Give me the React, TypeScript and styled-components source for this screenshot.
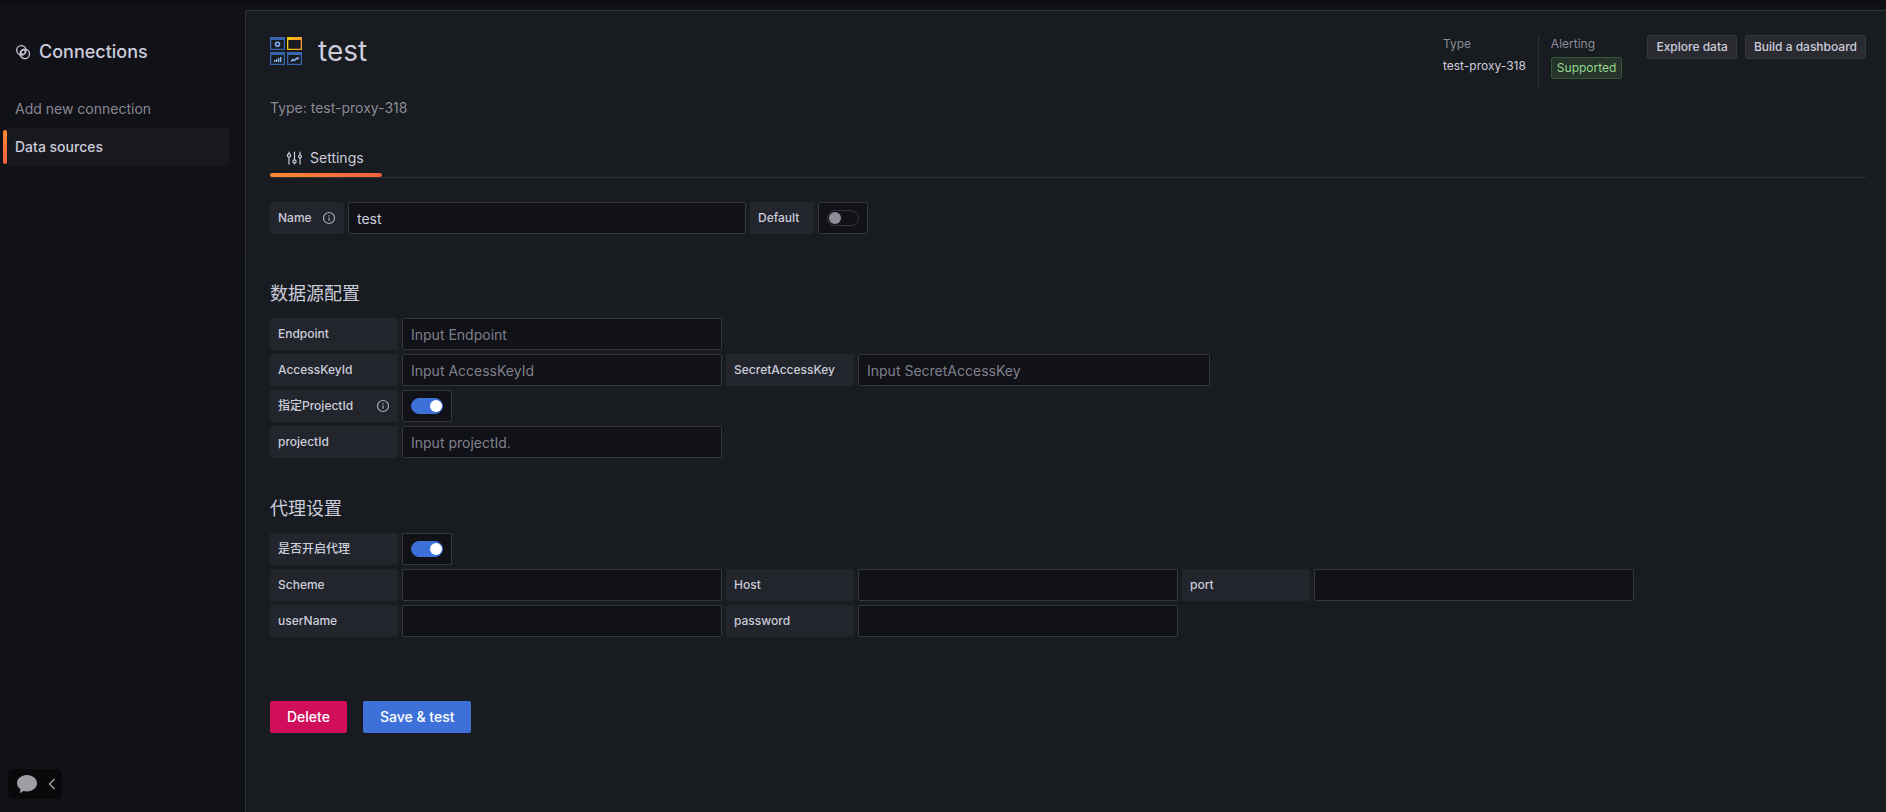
import React from 'react';
import styled, { createGlobalStyle, css } from 'styled-components';

const GlobalStyle = createGlobalStyle`
  * { box-sizing: border-box; }
  body {
    margin: 0;
    background: #111217;
    color: #ccccdc;
    font: 400 14px/22px Inter, "Noto Sans CJK SC", sans-serif;
  }
  button, input { font: inherit; color: inherit; }
`;

const Page = styled.div`
  display: flex;
  min-height: 100vh;
  padding-top: 10px;
  box-shadow: inset 0 4px 6px -4px rgba(0, 0, 0, 0.5);
`;

const Sidebar = styled.nav`
  display: flex;
  flex-direction: column;
  width: 245px;
  flex: none;
  padding: 28px 16px 0 0;
`;

const SidebarTitle = styled.h2`
  display: flex;
  align-items: center;
  gap: 8px;
  margin: 0 0 24px;
  padding-left: 15px;
  font-size: 18px;
  font-weight: 500;
  line-height: 28px;
`;

const NavLink = styled.a<{ $active?: boolean }>`
  display: flex;
  align-items: center;
  height: 38px;
  padding-left: 3px;
  color: rgba(204, 204, 220, 0.65);
  text-decoration: none;
  border-radius: 2px;
  gap: 8px;

  &::before {
    content: '';
    width: 4px;
    height: 34px;
    border-radius: 2px;
  }

  ${(p) =>
    p.$active &&
    css`
      color: #ccccdc;
      font-weight: 500;
      background: linear-gradient(90deg, transparent 7px, #18191d 7px);

      &::before {
        background: linear-gradient(0deg, #f55f3e, #ff8833);
      }
    `}
`;

const ChatWidget = styled.div`
  display: flex;
  align-items: center;
  gap: 8px;
  width: 54px;
  height: 30px;
  margin: auto 0 13px 8px;
  padding-left: 8px;
  border-radius: 6px;
  background: #08090b;
`;

const IconButton = styled.button`
  display: flex;
  padding: 0;
  border: 0;
  background: none;
  color: #9d9fa3;
`;

const Main = styled.main`
  flex: 1;
  min-width: 0;
  padding: 24px 20px 48px 24px;
  background: #181b1f;
  border: solid rgba(204, 204, 220, 0.12);
  border-width: 1px 0 0 1px;
  border-top-left-radius: 2px;
`;

const Header = styled.header`
  display: flex;
  justify-content: space-between;
  align-items: flex-start;
`;

const TitleGroup = styled.div`
  display: flex;
  align-items: center;
  gap: 16px;
  height: 32px;
`;

const Title = styled.h1`
  margin: 0;
  font-size: 28px;
  font-weight: 400;
  line-height: 32px;
`;

const HeaderInfo = styled.div`
  display: flex;
  align-items: flex-start;
`;

const InfoItem = styled.div<{ $divided?: boolean }>`
  display: flex;
  flex-direction: column;
  align-items: flex-start;
  height: 54px;
  font-size: 12px;
  line-height: 18px;
  padding-right: 12px;
  border-right: 1px solid ${(p) => (p.$divided ? 'rgba(204, 204, 220, 0.12)' : 'transparent')};
  margin-right: 12px;
  gap: 4px;
`;

const InfoLabel = styled.span`
  color: rgba(204, 204, 220, 0.65);
`;

const Badge = styled.span`
  height: 22px;
  padding: 1px 5px;
  border: 1px solid #35553a;
  border-radius: 2px;
  background: #25332a;
  color: #96d98d;
`;

const HeaderActions = styled.div`
  display: flex;
  gap: 8px;
`;

const SmallButton = styled.button`
  height: 24px;
  padding: 0 8px;
  border: 1px solid #36373d;
  border-radius: 2px;
  background: #2a2b31;
  font-size: 12px;
  font-weight: 500;
  line-height: 22px;
`;

const Subtitle = styled.p`
  margin: 8px 0 0;
  color: rgba(204, 204, 220, 0.65);
`;

const Tabs = styled.div`
  display: flex;
  margin: 20px 0 24px;
  border-bottom: 1px solid rgba(204, 204, 220, 0.12);
`;

const Tab = styled.a`
  position: relative;
  display: flex;
  align-items: center;
  gap: 8px;
  height: 38px;
  padding: 0 18px 0 16px;
  color: #ccccdc;
  text-decoration: none;

  &::after {
    content: '';
    position: absolute;
    inset: auto 0 0;
    height: 4px;
    border-radius: 2px;
    background: linear-gradient(90deg, #ff8833, #f55f3e);
  }
`;

const Form = styled.form`
  display: flex;
  flex-direction: column;
`;

const Section = styled.section<{ $spacing: number }>`
  display: flex;
  flex-direction: column;
  gap: 4px;
  margin-bottom: ${(p) => p.$spacing}px;
`;

const SectionTitle = styled.h3`
  margin: 0 0 8px;
  font-size: 18px;
  font-weight: 400;
  line-height: 24px;
`;

const Row = styled.div`
  display: flex;
  gap: 4px;
`;

const Label = styled.label<{ $width: number }>`
  display: flex;
  align-items: center;
  justify-content: space-between;
  width: ${(p) => p.$width}px;
  height: 32px;
  padding: 0 8px;
  border-radius: 2px;
  background: #22252b;
  font-size: 12px;
  font-weight: 500;
`;

const TextInput = styled.input<{ $width: number }>`
  width: ${(p) => p.$width}px;
  height: 32px;
  padding: 0 8px;
  border: 1px solid rgba(204, 204, 220, 0.2);
  border-radius: 2px;
  background: #111217;
  outline: none;

  &::placeholder {
    color: rgba(204, 204, 220, 0.6);
    opacity: 1;
  }
`;

const SwitchBox = styled.span`
  display: flex;
  align-items: center;
  width: 50px;
  height: 32px;
  padding-left: 8px;
  border: 1px solid rgba(204, 204, 220, 0.2);
  border-radius: 2px;
  background: #111217;
`;

const Switch = styled.input`
  appearance: none;
  display: flex;
  align-items: center;
  width: 32px;
  height: 16px;
  margin: 0;
  padding: 0 1px;
  border: 1px solid rgba(204, 204, 220, 0.2);
  border-radius: 8px;

  &::before {
    content: '';
    width: 12px;
    height: 12px;
    border-radius: 50%;
    background: #8e8e9a;
  }

  &:checked {
    justify-content: flex-end;
    padding: 0;
    border-color: #3d71d9;
    background: #3d71d9;
  }

  &:checked::before {
    background: #fff;
  }
`;

const Actions = styled.div`
  display: flex;
  gap: 16px;
`;

const Button = styled.button<{ $danger?: boolean }>`
  height: 32px;
  padding: 0 17px;
  border: 0;
  border-radius: 2px;
  background: ${(p) => (p.$danger ? '#d10e5c' : '#3d71d9')};
  color: #fff;
  font-weight: 500;
`;

const ConnectionsIcon = () => (
  <svg width="16" height="16" viewBox="0 0 16 16" fill="none" stroke="currentColor" strokeWidth="1.3">
    <circle cx="6.4" cy="6.3" r="4.7" />
    <circle cx="9.8" cy="9.9" r="4.7" />
    <rect x="6.1" y="6.1" width="4" height="4" rx="0.8" transform="rotate(45 8.1 8.1)" />
  </svg>
);

const SourceLogo = () => (
  <svg width="32" height="28" viewBox="0 0 32 28" fill="none">
    <defs>
      <linearGradient id="gold" x1="0" y1="0" x2="1" y2="0">
        <stop stopColor="#f2cc0c" />
        <stop offset="1" stopColor="#ff9830" />
      </linearGradient>
    </defs>
    <path
      fill="#3865ab"
      fillRule="evenodd"
      d="M0 0h15v13H0zM1.300 3v8.700h12.400V3zM0 15h15v13H0zM1.300 18v8.700h12.400V18zM17 15h15v13H17zM18.300 18v8.700h12.400V18z"
    />
    <path fill="url(#gold)" fillRule="evenodd" d="M17 0h15v13H17zM18.300 3v8.700h12.400V3z" />
    <circle cx="7.5" cy="7.3" r="2" stroke="#84aff1" strokeWidth="1.6" />
    <path fill="#84aff1" d="M4 23h1.500v2H4zM6 22h1.400v3H6zM8 21h1.400v4H8zM10 20h1.400v5H10z" />
    <path stroke="#84aff1" strokeWidth="1.6" d="M21 24.500l2-2 1.500 1 2-2.200 1 .6 1.300-1.400" />
  </svg>
);

const SlidersIcon = () => (
  <svg width="16" height="16" viewBox="0 0 16 16" fill="none" stroke="currentColor" strokeWidth="1.2" strokeLinecap="round">
    <path d="M3 2v1.800M3 7V14M8.500 2v7.800M8.500 13v1M14 2v2.800M14 8V14" />
    <circle cx="3" cy="5.400" r="1.600" />
    <circle cx="8.500" cy="11.400" r="1.600" />
    <circle cx="14" cy="6.400" r="1.400" />
  </svg>
);

const InfoIcon = () => (
  <svg width="14" height="14" viewBox="0 0 14 14" fill="none" stroke="currentColor" strokeWidth="1.2" opacity="0.8">
    <circle cx="7" cy="7" r="5.500" />
    <path d="M7 6.400v3.400M7 4.200v1.200" />
  </svg>
);

const ChatIcon = () => (
  <svg width="22" height="20" viewBox="0 0 22 20" fill="currentColor">
    <path d="M11 1c5.600 0 10 3.600 10 8.300s-4.400 8.200-10 8.200c-1.300 0-2.500-.2-3.600-.5-1 .9-2.300 1.600-3.800 2 .6-1 .9-2.300.8-3.800C2.300 13.700 1 11.600 1 9.300 1 4.600 5.400 1 11 1z" />
  </svg>
);

const ChevronIcon = () => (
  <svg width="12" height="12" viewBox="0 0 12 12" fill="none" stroke="currentColor" strokeWidth="1.400">
    <path d="M8.500 1L3.500 6l5 5" />
  </svg>
);

interface FieldProps {
  id: string;
  label: string;
  labelWidth?: number;
  width?: number;
  placeholder?: string;
  type?: string;
  value?: string;
  info?: boolean;
}

const Field = ({ id, label, labelWidth = 128, width = 320, placeholder, type = 'text', value, info }: FieldProps) => (
  <>
    <Label htmlFor={id} $width={labelWidth}>
      {label}
      {info && <InfoIcon />}
    </Label>
    <TextInput id={id} type={type} $width={width} placeholder={placeholder} defaultValue={value} />
  </>
);

interface ToggleProps {
  id: string;
  label: string;
  labelWidth?: number;
  on?: boolean;
  info?: boolean;
}

const Toggle = ({ id, label, labelWidth = 128, on, info }: ToggleProps) => (
  <>
    <Label htmlFor={id} $width={labelWidth}>
      {label}
      {info && <InfoIcon />}
    </Label>
    <SwitchBox>
      <Switch id={id} type="checkbox" role="switch" defaultChecked={on} />
    </SwitchBox>
  </>
);

export default function App() {
  return (
    <>
      <GlobalStyle />
      <Page>
        <Sidebar>
          <SidebarTitle>
            <ConnectionsIcon />
            Connections
          </SidebarTitle>
          <NavLink href="#new">Add new connection</NavLink>
          <NavLink href="#sources" $active>
            Data sources
          </NavLink>
          <ChatWidget>
            <IconButton aria-label="Chat">
              <ChatIcon />
            </IconButton>
            <IconButton aria-label="Collapse">
              <ChevronIcon />
            </IconButton>
          </ChatWidget>
        </Sidebar>
        <Main>
          <Header>
            <TitleGroup>
              <SourceLogo />
              <Title>test</Title>
            </TitleGroup>
            <HeaderInfo>
              <InfoItem $divided>
                <InfoLabel>Type</InfoLabel>
                <span>test-proxy-318</span>
              </InfoItem>
              <InfoItem>
                <InfoLabel>Alerting</InfoLabel>
                <Badge>Supported</Badge>
              </InfoItem>
              <HeaderActions>
                <SmallButton>Explore data</SmallButton>
                <SmallButton>Build a dashboard</SmallButton>
              </HeaderActions>
            </HeaderInfo>
          </Header>
          <Subtitle>Type: test-proxy-318</Subtitle>
          <Tabs>
            <Tab href="#settings">
              <SlidersIcon />
              Settings
            </Tab>
          </Tabs>
          <Form>
            <Section $spacing={48}>
              <Row>
                <Field id="name" label="Name" labelWidth={74} width={398} value="test" info />
                <Toggle id="default" label="Default" labelWidth={64} />
              </Row>
            </Section>
            <Section $spacing={39}>
              <SectionTitle>数据源配置</SectionTitle>
              <Row>
                <Field id="endpoint" label="Endpoint" placeholder="Input Endpoint" />
              </Row>
              <Row>
                <Field id="access-key" label="AccessKeyId" placeholder="Input AccessKeyId" />
                <Field id="secret-key" label="SecretAccessKey" width={352} placeholder="Input SecretAccessKey" />
              </Row>
              <Row>
                <Toggle id="use-project" label="指定ProjectId" on info />
              </Row>
              <Row>
                <Field id="project" label="projectId" placeholder="Input projectId." />
              </Row>
            </Section>
            <Section $spacing={64}>
              <SectionTitle>代理设置</SectionTitle>
              <Row>
                <Toggle id="use-proxy" label="是否开启代理" on />
              </Row>
              <Row>
                <Field id="scheme" label="Scheme" />
                <Field id="host" label="Host" />
                <Field id="port" label="port" />
              </Row>
              <Row>
                <Field id="user" label="userName" />
                <Field id="password" label="password" type="password" />
              </Row>
            </Section>
            <Actions>
              <Button type="button" $danger>
                Delete
              </Button>
              <Button type="button">Save &amp; test</Button>
            </Actions>
          </Form>
        </Main>
      </Page>
    </>
  );
}
